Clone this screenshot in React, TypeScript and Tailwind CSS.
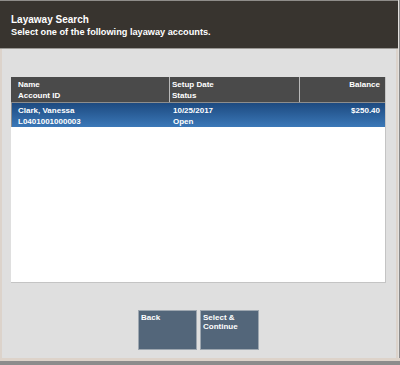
import React from "react"

// ---------------------------------------------------------------------------
// Data
// ---------------------------------------------------------------------------

type Account = {
  name: string
  id: string
  setupDate: string
  status: string
  balance: string
}

const accounts: Account[] = [
  {
    name: "Clark, Vanessa",
    id: "L0401001000003",
    setupDate: "10/25/2017",
    status: "Open",
    balance: "$250.40",
  },
]

// ---------------------------------------------------------------------------
// Page
// ---------------------------------------------------------------------------

export default function App() {
  return (
    <div
      className="flex h-[365px] w-[400px] flex-col overflow-hidden bg-[#8c8c8c]"
      style={{ fontFamily: '"Liberation Sans", Arial, sans-serif' }}
    >
      <div className="flex flex-1 flex-col border-r border-[#8a8a8a]">
        <div className="flex flex-1 flex-col border-r border-[#e4e1de]">
          {/* Header */}
          <div className="h-[49px] border-t border-[#8f8d8a] border-b border-b-[#9a9894] bg-[#38342f] px-[11px] pt-[12px] font-bold text-white">
            <div className="text-[10px] leading-[13px]">Layaway Search</div>
            <div className="text-[9.2px] leading-[12px]">
              Select one of the following layaway accounts.
            </div>
          </div>

          {/* Body */}
          <div className="flex flex-1 flex-col border-x-2 border-x-[#dcd3cb] bg-[#dfdfdf] pl-[9px] pr-[10px] pt-[28px]">
            <AccountTable />

            <div className="mt-[27px] flex justify-center gap-[3px]">
              <ActionButton label="Back" />
              <ActionButton label={"Select &\nContinue"} />
            </div>
          </div>
        </div>
      </div>
      <div className="h-[3px] bg-[#ddd3ca]" />
      <div className="h-[4px] bg-[#8c8c8c]" />
    </div>
  )
}

// ---------------------------------------------------------------------------
// Table
// ---------------------------------------------------------------------------

function AccountTable() {
  return (
    <div className="flex h-[206px] flex-col border-r border-b border-[#c4c4c4] bg-white text-[8px] font-bold leading-[11px] text-white">
      <div className="flex h-[25px] bg-[#4a4a4a]">
        <div className="w-[159px] border-r border-[#b9b9b9] px-[7px] pt-[2px]">
          <div>Name</div>
          <div>Account ID</div>
        </div>
        <div className="w-[130px] border-r border-[#b9b9b9] px-[2px] pt-[2px]">
          <div>Setup Date</div>
          <div>Status</div>
        </div>
        <div className="flex-1 px-[5px] pt-[2px] text-right">Balance</div>
      </div>

      {accounts.map((a) => (
        <div
          key={a.id}
          className="flex h-[25px] border-t border-l border-[#8d8d8d] bg-gradient-to-b from-[#1d4a80] to-[#3b78b8]"
        >
          <div className="w-[158px] px-[6px] pt-[2px]">
            <div>{a.name}</div>
            <div>{a.id}</div>
          </div>
          <div className="w-[131px] px-[3px] pt-[2px]">
            <div>{a.setupDate}</div>
            <div>{a.status}</div>
          </div>
          <div className="flex-1 px-[5px] pt-[2px] text-right">{a.balance}</div>
        </div>
      ))}
    </div>
  )
}

// ---------------------------------------------------------------------------
// Button
// ---------------------------------------------------------------------------

function ActionButton({ label }: { label: string }) {
  return (
    <button
      type="button"
      className="flex h-[40px] w-[59px] items-start whitespace-pre-line border border-[#9ea7b0] bg-[#53667a] px-[2px] pt-[2px] text-left text-[8px] font-bold leading-[9px] text-white"
    >
      {label}
    </button>
  )
}
